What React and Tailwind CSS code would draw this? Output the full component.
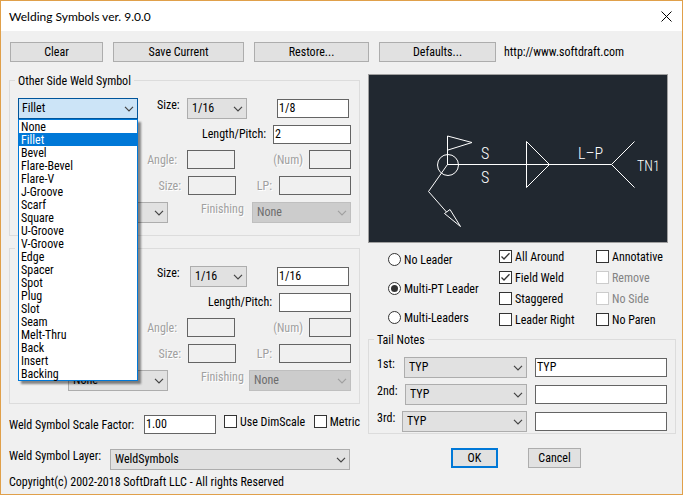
import { useState } from "react";

const WELD_TYPES = [
  "None",
  "Fillet",
  "Bevel",
  "Flare-Bevel",
  "Flare-V",
  "J-Groove",
  "Scarf",
  "Square",
  "U-Groove",
  "V-Groove",
  "Edge",
  "Spacer",
  "Spot",
  "Plug",
  "Slot",
  "Seam",
  "Melt-Thru",
  "Back",
  "Insert",
  "Backing",
];

function Chevron() {
  return (
    <svg
      viewBox="0 0 10 6"
      className="pointer-events-none absolute right-[4px] top-[8px] h-[6px] w-[10px]"
      fill="none"
      stroke="currentColor"
      strokeWidth="1.2"
    >
      <path d="M1 0.8 L5 4.8 L9 0.8" />
    </svg>
  );
}

function Select({ id, label, options, className = "", disabled, ...rest }) {
  return (
    <div
      className={`relative shrink-0 ${disabled ? "text-[#a0a0a0]" : "text-[#444444]"} ${className}`}
    >
      <select
        id={id}
        aria-label={label}
        disabled={disabled}
        className={`block h-[21px] w-full appearance-none border pr-4 pl-[4px] outline-none ${
          disabled
            ? "border-[#bfbfbf] bg-[#cccccc] text-[#6d6d6d] opacity-100"
            : "border-[#adadad] bg-[#e1e1e1] text-black"
        }`}
        {...rest}
      >
        {options.map((option) => (
          <option key={option}>{option}</option>
        ))}
      </select>
      <Chevron />
    </div>
  );
}

function TextBox({ id, label, value = "", className = "", disabled }) {
  return (
    <input
      id={id}
      type="text"
      aria-label={label}
      defaultValue={value}
      disabled={disabled}
      className={`block h-[19px] shrink-0 border border-[#646464] px-px pb-px outline-none ${
        disabled ? "bg-[#f0f0f0]" : "bg-white"
      } ${className}`}
    />
  );
}

function FieldLabel({ htmlFor, disabled, className = "", children }) {
  return (
    <label
      htmlFor={htmlFor}
      className={`whitespace-nowrap leading-[15px] ${
        disabled ? "text-[#a0a0a0] [text-shadow:1px_1px_0_#ffffff]" : ""
      } ${className}`}
    >
      {children}
    </label>
  );
}

function CheckBox({ label, checked, disabled }) {
  return (
    <label
      className={`flex h-[13px] items-start gap-[3px] whitespace-nowrap leading-[15px] ${
        disabled ? "text-[#838383]" : ""
      }`}
    >
      <span className="relative block h-[13px] w-[13px] shrink-0">
        <input
          type="checkbox"
          defaultChecked={checked}
          disabled={disabled}
          className="peer block h-[13px] w-[13px] appearance-none border border-[#333333] bg-white disabled:border-[#cccccc]"
        />
        <svg
          viewBox="0 0 13 13"
          className="pointer-events-none absolute inset-0 hidden peer-checked:block"
          fill="none"
          stroke="#333333"
          strokeWidth="1.3"
        >
          <path d="M2.5 6.5 L5 9 L10.5 3.2" />
        </svg>
      </span>
      {label}
    </label>
  );
}

function Radio({ label, checked }) {
  return (
    <label className="flex h-[13px] items-start gap-[3px] whitespace-nowrap leading-[15px]">
      <span className="relative block h-[13px] w-[13px] shrink-0">
        <input
          type="radio"
          name="leader"
          defaultChecked={checked}
          className="peer block h-[13px] w-[13px] appearance-none rounded-full border border-[#333333] bg-white"
        />
        <span className="pointer-events-none absolute inset-[3px] hidden rounded-full bg-[#333333] peer-checked:block" />
      </span>
      {label}
    </label>
  );
}

function GroupBox({ title, label, className = "", children }) {
  return (
    <fieldset
      aria-label={label}
      className={`min-w-0 border border-[#dcdcdc] px-2 ${className}`}
    >
      <legend className="-ml-[3px] h-[13px] min-w-[50px] px-[3px] leading-[15px]">{title}</legend>
      {children}
    </fieldset>
  );
}

// Weld type combo with its list dropped down over the fields below
function WeldTypeSelect({ id, defaultOpen }) {
  const [open, setOpen] = useState(defaultOpen);
  const [value, setValue] = useState("Fillet");

  const toggle = (e) => {
    e.preventDefault();
    setOpen(!open);
  };

  const choose = (type) => {
    setValue(type);
    setOpen(false);
  };

  return (
    <div className="relative w-[120px] shrink-0 text-[#444444]">
      <select
        id={id}
        aria-label="Weld type"
        value={value}
        onMouseDown={toggle}
        onChange={(e) => setValue(e.target.value)}
        className="block h-[21px] w-full appearance-none border border-[#00559b] bg-[#cce4f7] pl-[3px] text-black outline-none"
      >
        {WELD_TYPES.map((type) => (
          <option key={type}>{type}</option>
        ))}
      </select>
      <Chevron />
      {open && (
        <ul
          role="listbox"
          aria-label="Weld types"
          className="absolute top-full left-0 z-10 w-full border border-[#0078d7] bg-white text-black shadow-[3px_3px_2px_rgba(0,0,0,0.45)]"
        >
          {WELD_TYPES.map((type) => (
            <li
              key={type}
              role="option"
              aria-selected={type === value}
              onClick={() => choose(type)}
              className={`h-[13px] pl-[2px] leading-[15px] ${
                type === value ? "bg-[#0078d7] text-white" : ""
              }`}
            >
              {type}
            </li>
          ))}
        </ul>
      )}
    </div>
  );
}

function WeldSide({ prefix, title, label, size, pitch, open, sizeWidth, pitchWidth, finishWidth }) {
  return (
    <GroupBox title={title} label={label} className="pb-[12px]">
      <div className="flex flex-col gap-[6px] pt-[11px]">
        <div className="flex items-start">
          {open ? (
            <WeldTypeSelect id={`${prefix}-type`} defaultOpen />
          ) : (
            <Select label="Weld type" options={WELD_TYPES} className="w-[120px]" />
          )}
          <FieldLabel htmlFor={`${prefix}-unit`} className="ml-[19px] flex-1">
            Size:
          </FieldLabel>
          <Select id={`${prefix}-unit`} options={["1/16"]} className={sizeWidth} />
          <TextBox label="Size value" value={size} className="mt-px mr-[2px] ml-[30px] w-[72px]" />
        </div>

        <div className="flex h-[19px] items-center justify-end gap-[7px]">
          <FieldLabel htmlFor={`${prefix}-pitch`}>Length/Pitch:</FieldLabel>
          <TextBox id={`${prefix}-pitch`} value={pitch} className={pitchWidth} />
        </div>

        <div className="flex h-[20px] items-start justify-end">
          <FieldLabel htmlFor={`${prefix}-angle`} disabled className="mr-[10px] pt-[3px]">
            Angle:
          </FieldLabel>
          <TextBox id={`${prefix}-angle`} disabled className="w-[48px]" />
          <FieldLabel
            htmlFor={`${prefix}-num`}
            disabled
            className="w-[74px] pt-[3px] pr-[6px] text-right"
          >
            (Num)
          </FieldLabel>
          <TextBox id={`${prefix}-num`} disabled className="w-[42px]" />
        </div>

        <div className="flex h-[20px] items-start justify-end">
          <FieldLabel htmlFor={`${prefix}-size2`} disabled className="mr-[7px] pt-[3px]">
            Size:
          </FieldLabel>
          <TextBox id={`${prefix}-size2`} disabled className="w-[48px]" />
          <FieldLabel
            htmlFor={`${prefix}-lp`}
            disabled
            className="w-[43px] pt-[3px] pr-[7px] text-right"
          >
            LP:
          </FieldLabel>
          <TextBox id={`${prefix}-lp`} disabled className="w-[72px]" />
        </div>

        <div className="flex items-start">
          <Select label="Contour" options={["None"]} className="ml-[50px] w-[100px]" />
          <FieldLabel htmlFor={`${prefix}-finish`} disabled className="ml-[33px] flex-1">
            Finishing
          </FieldLabel>
          <Select id={`${prefix}-finish`} options={["None"]} disabled className={finishWidth} />
        </div>
      </div>
    </GroupBox>
  );
}

function SymbolPreview() {
  return (
    <svg
      viewBox="0 0 298 167"
      className="mr-2 block h-[169px] border border-[#a0a0a0] bg-[#212830]"
      fill="none"
      stroke="#ffffff"
      strokeWidth="1"
    >
      {/* field weld flag */}
      <path d="M78.5 90 V61 L103 67.5 L79 75" />
      {/* all around circle */}
      <circle cx="79" cy="90" r="10.5" />
      {/* reference line and tail */}
      <path d="M78 89.5 H242.5" />
      <path d="M265.5 66.5 L242.5 89.5 L265.5 112.5" />
      {/* fillet triangle */}
      <path d="M157.5 66.5 V112.5 L180.5 89.5 Z" />
      {/* leader with arrow head */}
      <path d="M78.5 89.5 L59.5 116.5 L77.5 137" />
      <path d="M75.5 138.5 L81 134.5 L91.5 151.5 Z" />
      <g
        fill="#ffffff"
        stroke="none"
        className="font-['Roboto_Condensed','Roboto',sans-serif] text-[16px] font-light"
      >
        <text x="112" y="84">S</text>
        <text x="112" y="108">S</text>
        <text x="209" y="84">L–P</text>
        <text x="268" y="96" className="text-[14px]">TN1</text>
      </g>
    </svg>
  );
}

const TAIL_NOTES = [
  { label: "1st:", note: "TYP", width: "w-[123px]" },
  { label: "2nd:", note: "", width: "w-[122px]" },
  { label: "3rd:", note: "", width: "w-[125px]" },
];

const pushButton = "h-[20px] border border-[#adadad] bg-[#e1e1e1] text-center";

export default function App() {
  return (
    <div className="flex min-h-screen flex-col border border-[#e0a04a] bg-[#f0f0f0] font-['Roboto_Condensed','Roboto',sans-serif] text-[12px] leading-[13px] text-black">
      <header className="flex h-[30px] items-center justify-between bg-white pr-[10px] pl-2">
        <h1 className="font-['Lato','Open_Sans',sans-serif] text-[12px]">
          Welding Symbols ver. 9.0.0
        </h1>
        <button type="button" aria-label="Close" className="h-[11px] w-[11px]">
          <svg viewBox="0 0 11 11" className="block h-[11px] w-[11px]" stroke="#000000">
            <path d="M0.5 0.5 L10.5 10.5 M10.5 0.5 L0.5 10.5" />
          </svg>
        </button>
      </header>

      <form className="pt-[11px] pr-[6px] pl-2" onSubmit={(e) => e.preventDefault()}>
        {/* Toolbar */}
        <div className="flex items-center gap-2 pl-px">
          <div className="flex gap-[10px]">
            <button type="button" className={`${pushButton} w-[93px]`}>Clear</button>
            <button type="button" className={`${pushButton} w-[131px]`}>Save Current</button>
            <button type="button" className={`${pushButton} w-[115px]`}>Restore...</button>
            <button type="button" className={`${pushButton} w-[117px]`}>Defaults...</button>
          </div>
          <a href="http://www.softdraft.com">http://www.softdraft.com</a>
        </div>

        <div className="grid grid-cols-[351fr_308fr] gap-2 pt-[12px]">
          {/* Weld sides */}
          <div className="min-w-0">
            <div className="flex flex-col gap-[6px]">
              <WeldSide
                prefix="other"
                title="Other Side Weld Symbol"
                size="1/8"
                pitch="2"
                open
                sizeWidth="w-[60px]"
                pitchWidth="w-[78px]"
                finishWidth="w-[99px]"
              />
              <WeldSide
                prefix="arrow"
                label="Arrow Side Weld Symbol"
                size="1/16"
                sizeWidth="w-[57px]"
                pitchWidth="w-[72px]"
                finishWidth="w-[102px]"
              />
            </div>

            <div className="flex items-start pt-[11px]">
              <FieldLabel htmlFor="scale" className="w-[135px] pt-[3px]">
                Weld Symbol Scale Factor:
              </FieldLabel>
              <TextBox id="scale" value="1.00" className="w-[72px]" />
              <div className="flex flex-1 justify-between pl-2">
                <CheckBox label="Use DimScale" />
                <CheckBox label="Metric" />
              </div>
            </div>

            <div className="flex items-start pt-[15px] pr-[10px]">
              <FieldLabel htmlFor="layer" className="w-[101px]">
                Weld Symbol Layer:
              </FieldLabel>
              <Select id="layer" options={["WeldSymbols"]} className="flex-1" />
            </div>

            <p className="pt-[6px]">Copyright(c) 2002-2018 SoftDraft LLC - All rights Reserved</p>
          </div>

          {/* Preview and options */}
          <div className="flex min-w-0 flex-col">
            <SymbolPreview />

            <div className="flex pt-[7px] pl-[20px]">
              <div className="flex w-[111px] flex-col gap-4 pt-[3px]">
                <Radio label="No Leader" />
                <Radio label="Multi-PT Leader" checked />
                <Radio label="Multi-Leaders" />
              </div>
              <div className="flex w-[97px] flex-col gap-2">
                <CheckBox label="All Around" checked />
                <CheckBox label="Field Weld" checked />
                <CheckBox label="Staggered" />
                <CheckBox label="Leader Right" />
              </div>
              <div className="flex flex-col gap-2">
                <CheckBox label="Annotative" />
                <CheckBox label="Remove" disabled />
                <CheckBox label="No Side" disabled />
                <CheckBox label="No Paren" />
              </div>
            </div>

            <GroupBox title="Tail Notes" className="mt-[7px] pb-px">
              <div className="flex flex-col gap-[6px] pt-[11px]">
                {TAIL_NOTES.map((tail) => (
                  <div key={tail.label} className="flex items-start">
                    <FieldLabel htmlFor={`tail-${tail.label}`} className="flex-1">
                      {tail.label}
                    </FieldLabel>
                    <Select id={`tail-${tail.label}`} options={["TYP"]} className={tail.width} />
                    <TextBox
                      label={`${tail.label} note`}
                      value={tail.note}
                      className="mt-px ml-2 w-[132px]"
                    />
                  </div>
                ))}
              </div>
            </GroupBox>

            <div className="flex gap-[30px] pt-[14px] pl-[83px]">
              <button type="submit" className="h-[20px] w-[47px] border-2 border-[#0078d7] bg-[#e1e1e1]">
                OK
              </button>
              <button type="button" className={`${pushButton} w-[53px]`}>Cancel</button>
            </div>
          </div>
        </div>
      </form>
    </div>
  );
}
